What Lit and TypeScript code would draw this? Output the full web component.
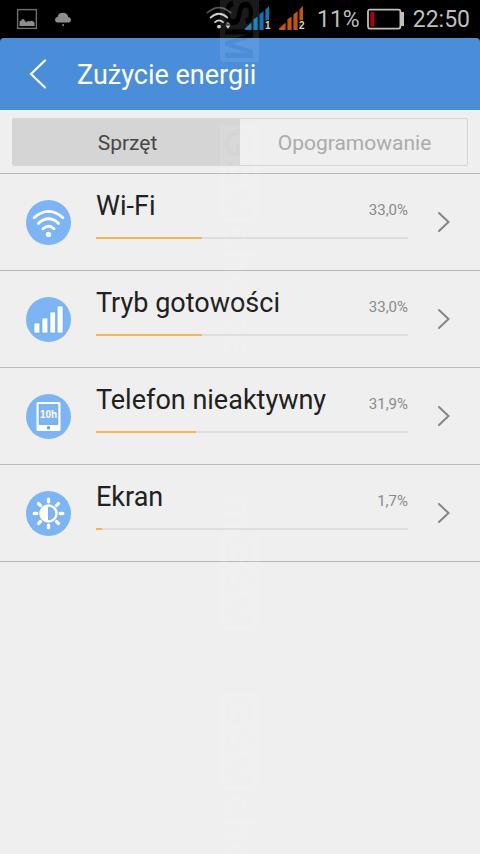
import { LitElement, html, svg, css } from "lit";
import { customElement, property } from "lit/decorators.js";

const icons: Record<string, unknown> = {
  wifi: svg`
    <g fill="none" stroke="#fff" stroke-width="2.8" stroke-linecap="round">
      <path d="M8.2 17.6 Q22.5 5.2 36.8 17.6" />
      <path d="M12.4 23.4 Q22.5 14.2 32.6 23.4" />
      <path d="M17 28.8 Q22.5 23.6 28 28.8" />
    </g>
    <circle cx="22.5" cy="34.4" r="2.7" fill="#fff" />`,
  signal: svg`
    <g fill="#fff" stroke="#62a4ee" stroke-width="0.6">
      <rect x="8" y="26" width="5.8" height="10" rx="0.8" />
      <rect x="16" y="21" width="5.8" height="15" rx="0.8" />
      <rect x="24" y="15" width="5.4" height="21" rx="0.8" />
      <rect x="31.2" y="9" width="5.8" height="27" rx="0.8" />
    </g>`,
  idle: svg`
    <rect x="10.5" y="8" width="24" height="29" rx="1.5" fill="#fff" />
    <rect x="13.2" y="10.7" width="18.6" height="19.6" fill="#7db4f3" stroke="#5a9de8" stroke-width="0.8" />
    <circle cx="22.5" cy="33.8" r="1.7" fill="#5fa2ed" />
    <text x="22.5" y="24" text-anchor="middle" class="glyph">10h</text>`,
  screen: svg`
    <g stroke="#fff" stroke-width="3.4" stroke-linecap="round">
      <path d="M22.5 8.2v2.6M22.5 34.2v2.6M8.2 22.5h2.6M34.2 22.5h2.6M12.6 12.6l1.8 1.8M30.6 30.6l1.8 1.8M12.6 32.4l1.8-1.8M30.6 14.4l1.8-1.8" />
    </g>
    <circle cx="22.5" cy="22.5" r="9.2" fill="#fff" />
    <path d="M22.5 16.2a6.3 6.3 0 0 1 0 12.6z" fill="#7db4f3" stroke="#5a9de8" stroke-width="0.7" />`,
};

@customElement("status-bar")
export class StatusBar extends LitElement {
  static styles = css`
    :host {
      display: flex;
      align-items: center;
      height: 38px;
      padding: 0 10px 0 16px;
      background: #000;
      color: #bebebe;
      font: 23px/26px Roboto, sans-serif;
    }
    svg {
      display: block;
      flex: none;
      overflow: visible;
    }
    .cloud {
      margin-left: 16px;
    }
    .net {
      margin-bottom: 2px;
    }
    .wifi {
      margin-left: auto;
    }
    .sim {
      margin-left: 13px;
    }
    .sim2 {
      margin-left: 8px;
    }
    .simno {
      font: bold 10px/10px "Liberation Sans", sans-serif;
      fill: #d8d8d8;
      stroke: #000;
      stroke-width: 2px;
      paint-order: stroke;
    }
    .percent,
    .clock {
      padding-top: 2px;
    }
    .percent {
      margin-left: 12px;
    }
    .battery {
      margin: 0 9px 0 7px;
    }
  `;

  private bars(color: string, n: string) {
    return svg`
      <path fill=${color} d="M0 24V22.6L6.6 16.4V24zM8.4 24V13.6L12.6 10.4V24zM14.4 24V8.4L18.6 5V24zM20.4 24V3.4L24 0V24z" />
      <text class="simno" x="20" y="23">${n}</text>`;
  }

  render() {
    return html`
      <svg width="22" height="22" viewBox="0 0 22 22" aria-hidden="true">
        <rect x="1.6" y="1.6" width="18.8" height="18.8" fill="none" stroke="#707070" stroke-width="1.4" />
        <path fill="#8e8e8e" d="M3.5 18V13.5L5 12.8Q6 10 8 11.5L10.2 14.4Q12 12.2 14 13.4Q15.5 12 17.2 13.4L18.5 14.6V18z" />
      </svg>
      <svg class="cloud" width="18" height="14" viewBox="0 0 18 14" aria-hidden="true">
        <path fill="#8e8e8e" d="M3.2 10.6A2.9 2.9 0 0 1 3.6 4.9A5.4 5.2 0 0 1 14.2 4.9A2.9 2.9 0 0 1 14.8 10.6z" />
        <path fill="#8e8e8e" d="M8.4 12h1.4v2H8.4z" />
      </svg>
      <svg class="net wifi" width="26" height="24" viewBox="0 0 26 24" aria-hidden="true">
        <g fill="none" stroke-width="1.8" stroke-linecap="round">
          <path stroke="#555" d="M1.4 6.6Q13 -3.4 24.6 6.6" />
          <path stroke="#d0d0d0" d="M4.6 11.6Q13 4 21.4 11.6" />
          <path stroke="#d0d0d0" d="M9 16.2Q13 12.6 17 16.2" />
        </g>
        <circle cx="13" cy="20.6" r="1.9" fill="#d0d0d0" />
        <path fill="#777" d="M19.6 18.4h4.8L22 15.4z" />
        <path fill="#d0d0d0" d="M19.6 19.6h4.8L22 22.8z" />
      </svg>
      <svg class="net sim" width="26" height="24" viewBox="0 0 26 24" aria-hidden="true">${this.bars("#0b78b4", "1")}</svg>
      <svg class="net sim2" width="26" height="24" viewBox="0 0 26 24" aria-hidden="true">${this.bars("#c2560f", "2")}</svg>
      <span class="percent">11%</span>
      <svg class="battery" width="37" height="22" viewBox="0 0 37 22" aria-hidden="true">
        <rect x="1" y="1.6" width="32.4" height="19" rx="2" fill="none" stroke="#bebebe" stroke-width="1.8" />
        <rect x="34" y="4" width="3" height="14" fill="#bebebe" />
        <rect x="3.4" y="4" width="4" height="14.4" fill="#b00010" />
      </svg>
      <time class="clock">22:50</time>
    `;
  }
}

@customElement("usage-row")
export class UsageRow extends LitElement {
  @property() icon = "";
  @property() label = "";
  @property() share = "";
  @property({ type: Number }) fill = 0;

  static styles = css`
    :host {
      display: block;
      border-bottom: 1px solid #b9b9b9;
    }
    .row {
      display: flex;
      align-items: center;
      width: 100%;
      height: 96px;
      padding: 0 29px 0 26px;
      border: 0;
      background: none;
      color: #212121;
      font-family: Roboto, sans-serif;
      text-align: left;
    }
    svg {
      display: block;
      flex: none;
    }
    .glyph {
      font: bold 10px/10px "Liberation Sans", sans-serif;
      fill: #fff;
    }
    .body {
      flex: 1;
      margin: 0 29px 0 25px;
      padding-bottom: 16px;
    }
    .line {
      display: flex;
      align-items: baseline;
      justify-content: space-between;
      height: 48px;
      line-height: 34px;
    }
    .name {
      font-size: 27px;
    }
    .share {
      font-size: 15px;
      color: #8a8a8a;
    }
    .track {
      display: block;
      height: 2px;
      background: #dedede;
    }
    .value {
      display: block;
      height: 2px;
      background: #fdb253;
    }
  `;

  render() {
    return html`
      <button class="row" type="button">
        <svg width="45" height="45" viewBox="0 0 45 45" aria-hidden="true">
          <circle cx="22.5" cy="22.5" r="22.5" fill="#7db4f3" />
          ${icons[this.icon]}
        </svg>
        <span class="body">
          <span class="line">
            <span class="name">${this.label}</span>
            <span class="share">${this.share}</span>
          </span>
          <span class="track"><span class="value" style="width:${this.fill}%"></span></span>
        </span>
        <svg width="14" height="22" viewBox="0 0 14 22" aria-hidden="true">
          <path d="M2 2L11.5 11L2 20" fill="none" stroke="#858585" stroke-width="2" stroke-linecap="round" />
        </svg>
      </button>
    `;
  }
}

@customElement("app-root")
export class AppRoot extends LitElement {
  static styles = css`
    :host {
      display: block;
      position: relative;
      min-height: 100vh;
      overflow: hidden;
      background: #efefef;
      font-family: Roboto, sans-serif;
    }
    .top {
      background: #000;
    }
    header {
      display: flex;
      align-items: center;
      height: 72px;
      padding-left: 28px;
      border-radius: 4px 4px 0 0;
      background: #4a8dd8;
      color: #fff;
    }
    .back {
      display: block;
      padding: 0;
      border: 0;
      background: none;
    }
    .back svg {
      display: block;
    }
    h1 {
      margin: 0 0 0 29px;
      padding-top: 2px;
      font-size: 27px;
      font-weight: 400;
      line-height: 36px;
    }
    nav {
      padding: 8px 12px 7px;
      border-bottom: 1px solid #b9b9b9;
    }
    .tabs {
      display: grid;
      grid-template-columns: 1fr 1fr;
      height: 48px;
      box-sizing: border-box;
      border: 1px solid #d5d5d5;
      border-radius: 2px;
      overflow: hidden;
    }
    .tab {
      border: 0;
      padding: 2px 0 0 2px;
      background: none;
      color: #ababab;
      font: 21px/28px Roboto, sans-serif;
    }
    .tab.on {
      background: #d5d5d5;
      color: #484848;
    }
    .mark {
      position: absolute;
      top: 0;
      left: 220px;
      overflow: visible;
      pointer-events: none;
    }
    .box {
      font: bold 41px/41px "Liberation Sans", sans-serif;
    }
    .word {
      font: bold 42px/42px "Liberation Sans", sans-serif;
    }
  `;

  private rows = [
    { icon: "wifi", label: "Wi-Fi", share: "33,0%", fill: 34 },
    { icon: "signal", label: "Tryb gotowości", share: "33,0%", fill: 34 },
    { icon: "idle", label: "Telefon nieaktywny", share: "31,9%", fill: 32 },
    { icon: "screen", label: "Ekran", share: "1,7%", fill: 2 },
  ];

  private boxes = [-35, 125, 533, 693];

  render() {
    return html`
      <div class="top">
        <status-bar></status-bar>
        <header>
          <button class="back" type="button" aria-label="Wstecz">
            <svg width="20" height="32" viewBox="0 0 20 32" aria-hidden="true">
              <path d="M17 2.5L3 16L17 29.5" fill="none" stroke="#fff" stroke-width="2.2" stroke-linecap="round" />
            </svg>
          </button>
          <h1>Zużycie energii</h1>
        </header>
      </div>
      <nav>
        <div class="tabs" role="tablist">
          <button class="tab on" type="button" role="tab" aria-selected="true">Sprzęt</button>
          <button class="tab" type="button" role="tab" aria-selected="false">Opogramowanie</button>
        </div>
      </nav>
      <main>
        ${this.rows.map(
          (r) => html`<usage-row .icon=${r.icon} .label=${r.label} .share=${r.share} .fill=${r.fill}></usage-row>`
        )}
      </main>
      <svg class="mark" width="40" height="854" viewBox="0 0 40 854" aria-hidden="true">
        <defs>
          <mask id="cut" maskUnits="userSpaceOnUse" x="0" y="-40" width="40" height="900">
            <rect x="0" y="-40" width="40" height="900" fill="#fff" />
            ${this.boxes.map(
              (y) => svg`<text class="box" fill="#000" text-anchor="middle" transform="translate(5 ${y + 49}) rotate(90)">GSM</text>`
            )}
          </mask>
        </defs>
        <g fill="#fff" fill-opacity="0.1" mask="url(#cut)">
          ${this.boxes.map((y) => svg`<rect x="0" y=${y} width="39" height="97" rx="3" />`)}
        </g>
        <g class="word" fill="#fff" fill-opacity="0.08">
          <text transform="translate(4 225) rotate(90)">choice</text>
          <text transform="translate(4 495) rotate(90)">m</text>
          <text transform="translate(4 793) rotate(90)">choice</text>
        </g>
      </svg>
    `;
  }
}
